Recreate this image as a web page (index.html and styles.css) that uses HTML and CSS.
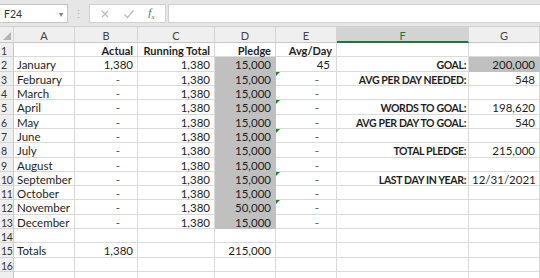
FILE: index.html
```html
<!DOCTYPE html>
<html lang="en">
<head>
    <meta charset="UTF-8">
    <title>Word Count Pledge</title>
    <link rel="stylesheet" href="styles.css">
</head>
<body>
    <div class="formula-bar">
        <div class="name-box">
            <span>F24</span>
            <span class="caret">&#9662;</span>
        </div>
        <div class="grip">&#8942;</div>
        <div class="fx-buttons">
            <svg width="10" height="10" viewBox="0 0 10 10"><path d="M2 2 L8 8 M8 2 L2 8" stroke="#b9b9b9" stroke-width="1.2"/></svg>
            <svg width="12" height="10" viewBox="0 0 12 10"><path d="M1.5 5.5 L4.5 8.5 L10.5 1.5" stroke="#b9b9b9" stroke-width="1.2" fill="none"/></svg>
            <span class="fx">f<sub>x</sub></span>
        </div>
        <div class="formula-input"></div>
    </div>

    <div class="sheet">
        <!-- column headers -->
        <div class="hdr corner"><svg width="8" height="8" viewBox="0 0 8 8"><path d="M8 0 L8 8 L0 8 Z" fill="#b4b4b4"/></svg></div>
        <div class="hdr">A</div>
        <div class="hdr">B</div>
        <div class="hdr">C</div>
        <div class="hdr">D</div>
        <div class="hdr">E</div>
        <div class="hdr active">F</div>
        <div class="hdr">G</div>

        <div class="rn">1</div>
        <div class="c"></div>
        <div class="c r b">Actual</div>
        <div class="c r b">Running Total</div>
        <div class="c r b">Pledge</div>
        <div class="c r b">Avg/Day</div>
        <div class="c"></div>
        <div class="c"></div>

        <div class="rn">2</div>
        <div class="c">January</div>
        <div class="c r">1,380</div>
        <div class="c r">1,380</div>
        <div class="c r fill">15,000</div>
        <div class="c r avg">45</div>
        <div class="c r lbl">GOAL:</div>
        <div class="c r fill">200,000</div>

        <div class="rn">3</div>
        <div class="c">February</div>
        <div class="c dash">-</div>
        <div class="c r">1,380</div>
        <div class="c r fill">15,000</div>
        <div class="c dash flag">-</div>
        <div class="c r lbl">AVG PER DAY NEEDED:</div>
        <div class="c r">548</div>

        <div class="rn">4</div>
        <div class="c">March</div>
        <div class="c dash">-</div>
        <div class="c r">1,380</div>
        <div class="c r fill">15,000</div>
        <div class="c dash">-</div>
        <div class="c"></div>
        <div class="c"></div>

        <div class="rn">5</div>
        <div class="c">April</div>
        <div class="c dash">-</div>
        <div class="c r">1,380</div>
        <div class="c r fill">15,000</div>
        <div class="c dash flag">-</div>
        <div class="c r lbl">WORDS TO GOAL:</div>
        <div class="c r">198,620</div>

        <div class="rn">6</div>
        <div class="c">May</div>
        <div class="c dash">-</div>
        <div class="c r">1,380</div>
        <div class="c r fill">15,000</div>
        <div class="c dash">-</div>
        <div class="c r lbl">AVG PER DAY TO GOAL:</div>
        <div class="c r">540</div>

        <div class="rn">7</div>
        <div class="c">June</div>
        <div class="c dash">-</div>
        <div class="c r">1,380</div>
        <div class="c r fill">15,000</div>
        <div class="c dash flag">-</div>
        <div class="c"></div>
        <div class="c"></div>

        <div class="rn">8</div>
        <div class="c">July</div>
        <div class="c dash">-</div>
        <div class="c r">1,380</div>
        <div class="c r fill">15,000</div>
        <div class="c dash">-</div>
        <div class="c r lbl">TOTAL PLEDGE:</div>
        <div class="c r">215,000</div>

        <div class="rn">9</div>
        <div class="c">August</div>
        <div class="c dash">-</div>
        <div class="c r">1,380</div>
        <div class="c r fill">15,000</div>
        <div class="c dash">-</div>
        <div class="c"></div>
        <div class="c"></div>

        <div class="rn">10</div>
        <div class="c">September</div>
        <div class="c dash">-</div>
        <div class="c r">1,380</div>
        <div class="c r fill">15,000</div>
        <div class="c dash flag">-</div>
        <div class="c r lbl">LAST DAY IN YEAR:</div>
        <div class="c r">12/31/2021</div>

        <div class="rn">11</div>
        <div class="c">October</div>
        <div class="c dash">-</div>
        <div class="c r">1,380</div>
        <div class="c r fill">15,000</div>
        <div class="c dash">-</div>
        <div class="c"></div>
        <div class="c"></div>

        <div class="rn">12</div>
        <div class="c">November</div>
        <div class="c dash">-</div>
        <div class="c r">1,380</div>
        <div class="c r fill">50,000</div>
        <div class="c dash flag">-</div>
        <div class="c"></div>
        <div class="c"></div>

        <div class="rn">13</div>
        <div class="c">December</div>
        <div class="c dash">-</div>
        <div class="c r">1,380</div>
        <div class="c r fill">15,000</div>
        <div class="c dash">-</div>
        <div class="c"></div>
        <div class="c"></div>

        <div class="rn">14</div>
        <div class="c"></div>
        <div class="c"></div>
        <div class="c"></div>
        <div class="c"></div>
        <div class="c"></div>
        <div class="c"></div>
        <div class="c"></div>

        <div class="rn">15</div>
        <div class="c">Totals</div>
        <div class="c r">1,380</div>
        <div class="c"></div>
        <div class="c r">215,000</div>
        <div class="c"></div>
        <div class="c"></div>
        <div class="c"></div>

        <div class="rn">16</div>
        <div class="c"></div>
        <div class="c"></div>
        <div class="c"></div>
        <div class="c"></div>
        <div class="c"></div>
        <div class="c"></div>
        <div class="c"></div>

        <div class="rn"></div>
        <div class="c"></div>
        <div class="c"></div>
        <div class="c"></div>
        <div class="c"></div>
        <div class="c"></div>
        <div class="c"></div>
        <div class="c"></div>
    </div>
</body>
</html>
```

FILE: styles.css
```css
* {
    margin: 0;
    padding: 0;
    box-sizing: border-box;
}

body {
    font-family: 'Lato', 'Liberation Sans', sans-serif;
    font-size: 11.5px;
    color: #1e1e1e;
    background: #ffffff;
    width: 540px;
    height: 278px;
    overflow: hidden;
}

/* formula bar */

.formula-bar {
    height: 27px;
    background: #e6e6e6;
    display: flex;
    align-items: flex-start;
    padding-top: 4px;
    border-bottom: 1px solid #d0d0d0;
}

.name-box {
    width: 68px;
    height: 19px;
    background: #fff;
    border: 1px solid #c6c6c6;
    border-left: none;
    display: flex;
    align-items: center;
    justify-content: space-between;
    padding: 0 4px 0 4px;
    font-size: 10.5px;
    color: #333;
}

.caret {
    font-size: 8px;
    color: #777;
}

.grip {
    width: 21px;
    text-align: center;
    color: #b0b0b0;
    font-size: 11px;
    line-height: 19px;
}

.fx-buttons {
    width: 77px;
    height: 19px;
    background: #fff;
    border: 1px solid #d2d2d2;
    display: flex;
    align-items: center;
    justify-content: space-around;
    padding: 0 4px;
}

.fx {
    font-family: 'Liberation Serif', serif;
    font-style: italic;
    font-size: 11px;
    color: #666;
}

.fx sub {
    font-size: 7px;
}

.formula-input {
    flex: 1;
    height: 19px;
    margin-left: 2px;
    background: #fff;
    border: 1px solid #d2d2d2;
    border-right: none;
}

/* grid */

.sheet {
    display: grid;
    grid-template-columns: 14px 61px 63px 77px 61px 61px 132px 71px;
    grid-template-rows: 16px repeat(17, 14.32px);
}

.hdr {
    background: #efefef;
    border-right: 1px solid #d4d4d4;
    border-bottom: 1px solid #c8c8c8;
    text-align: center;
    color: #444;
    font-size: 11px;
    line-height: 17px;
}

.hdr.corner {
    display: flex;
    align-items: flex-end;
    justify-content: flex-end;
    padding: 0 2px 2px 0;
}

.hdr.active {
    background: #d3d3d3;
    border-bottom: 2px solid #217346;
    color: #217346;
}

.rn {
    background: #efefef;
    border-right: 1px solid #c8c8c8;
    border-bottom: 1px solid #d4d4d4;
    color: #333;
    font-size: 10.5px;
    letter-spacing: -0.4px;
    padding: 1px 0 0 1px;
    line-height: 14px;
    white-space: nowrap;
    overflow: hidden;
}

.c {
    position: relative;
    border-right: 1px solid #dadada;
    border-bottom: 1px solid #dadada;
    padding: 1px 4px 0 3px;
    line-height: 14px;
    white-space: nowrap;
}

.r {
    text-align: right;
}

.b {
    font-weight: bold;
    font-size: 11px;
}

.lbl {
    font-weight: bold;
    font-size: 10.5px;
    letter-spacing: -0.35px;
    padding-right: 2px;
}

.avg {
    padding-right: 6px;
}

.dash {
    text-align: right;
    padding-right: 17px;
    color: #555;
}

.fill {
    background: #c0c0c0;
    border-right-color: #c0c0c0;
    border-bottom-color: #c0c0c0;
}

.flag::before {
    content: '';
    position: absolute;
    top: 0;
    left: 0;
    border-top: 4px solid #1e8a2e;
    border-right: 4px solid transparent;
}
```
